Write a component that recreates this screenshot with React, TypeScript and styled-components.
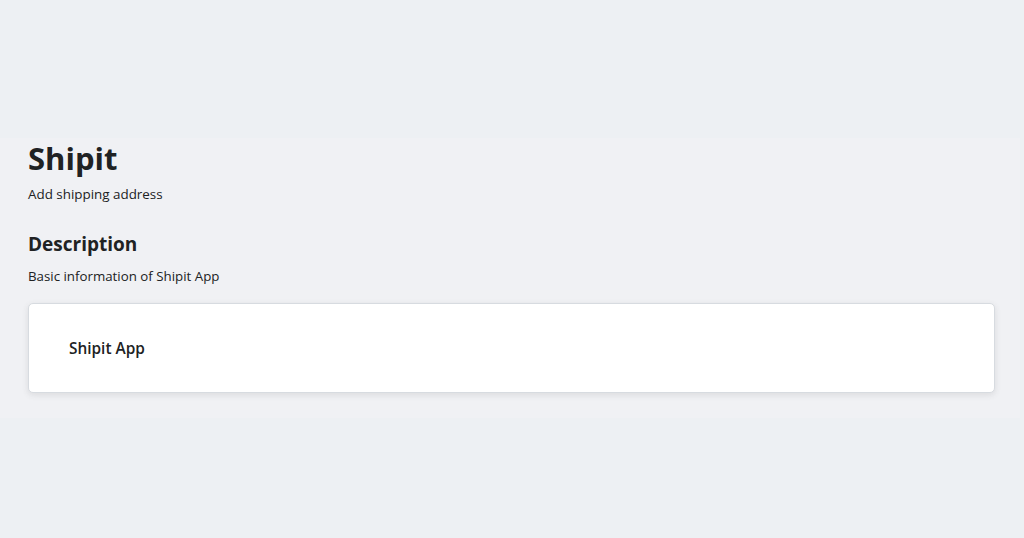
import React from "react";
import styled, { createGlobalStyle } from "styled-components";

const Global = createGlobalStyle`
  html, body { margin: 0; padding: 0; }
  body {
    background: #edf0f3;
    font-family: "Open Sans", "Noto Sans", sans-serif;
    color: #202223;
  }
`;

const Screen = styled.div`
  width: 1024px;
  height: 538px;
  padding-top: 138px;
  box-sizing: border-box;
`;

const Section = styled.section`
  width: 1020px;
  height: 280px;
  background: #f0f1f4;
  box-sizing: border-box;
  padding: 0 29px 0 28px;
  display: flex;
  flex-direction: column;
`;

const Title = styled.h1`
  margin: 0;
  font-size: 31px;
  line-height: 40px;
  font-weight: 700;
`;

const Subtitle = styled.p`
  margin: 6px 0 0;
  font-size: 13.4px;
  line-height: 20px;
`;

const Heading = styled.h2`
  margin: 26px 0 0;
  font-size: 19px;
  line-height: 28px;
  font-weight: 700;
`;

const Caption = styled.p`
  margin: 8px 0 0;
  font-size: 13.3px;
  line-height: 20px;
`;

const Card = styled.div`
  margin-top: 17px;
  width: 967px;
  height: 90px;
  box-sizing: border-box;
  background: #ffffff;
  border: 1px solid #d7dbe0;
  border-radius: 5px;
  box-shadow: 0 2px 6px rgba(63, 63, 68, 0.12);
  display: flex;
  align-items: center;
  padding: 1px 0 0 40px;
`;

const CardText = styled.span`
  font-size: 15.4px;
  font-weight: 600;
  line-height: 20px;
`;

export default function App() {
  return (
    <>
      <Global />
      <Screen>
        <Section>
          <Title>Shipit</Title>
          <Subtitle>Add shipping address</Subtitle>
          <Heading>Description</Heading>
          <Caption>Basic information of Shipit App</Caption>
          <Card>
            <CardText>Shipit App</CardText>
          </Card>
        </Section>
      </Screen>
    </>
  );
}
